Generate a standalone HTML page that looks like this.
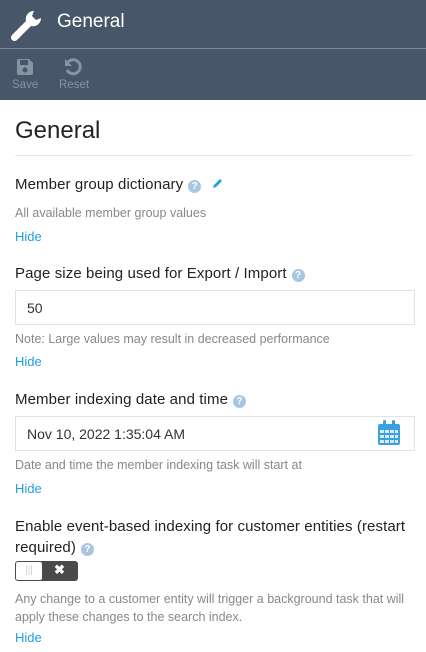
<!DOCTYPE html><html><head><style>
body{margin:0;width:426px;height:652px;overflow:hidden;font-family:"Liberation Sans",sans-serif;background:#fff;position:relative}
.a{position:absolute}
.hd{left:0;top:0;width:426px;height:48px;background:#475669}
.tb{left:0;top:48px;width:426px;height:52px;background:#475669;border-top:1px solid #7a8899;box-sizing:border-box}
.lab{left:15px;font-size:15px;color:#222;letter-spacing:0.1px}
.d{left:15px;font-size:12.5px;color:#888}
.h{left:15px;font-size:13px;color:#1e9ee0}
.in{left:15px;width:400px;height:35px;border:1px solid #e2e2e2;box-sizing:border-box;font-size:14px;color:#333;padding:9px 0 0 11px}
.q{display:inline-block;width:13px;height:13px;border-radius:50%;background:#a9c6e0;color:#fff;font-size:10px;font-weight:bold;text-align:center;line-height:13px;vertical-align:0px;margin-left:5px}
</style></head><body>
<div class="a hd"></div>
<svg class="a" style="left:8px;top:8px" width="36" height="36" viewBox="0 0 36 36"><path d="M26 3a8 8 0 0 0-8 10L4 27a3 3 0 0 0 5 5L23 18a8 8 0 0 0 10-8l-5 2-4-4 2-5z" fill="#fff"/></svg>
<div class="a" style="left:57px;top:11px;font-size:19px;color:#fff">General</div>
<div class="a tb"></div>
<svg class="a" style="left:16px;top:58px" width="18" height="18" viewBox="0 0 18 18"><path d="M1 3a2 2 0 0 1 2-2h10l4 4v10a2 2 0 0 1-2 2H3a2 2 0 0 1-2-2z" fill="#8693a3"/><rect x="4" y="2" width="8" height="5" fill="#475669"/><circle cx="9" cy="12" r="2.5" fill="#475669"/></svg>
<div class="a" style="left:12px;top:79px;font-size:11.5px;color:#8693a3">Save</div>
<svg class="a" style="left:64px;top:58px" width="18" height="18" viewBox="0 0 18 18"><path d="M4 4a7 7 0 1 1-1 8" fill="none" stroke="#8693a3" stroke-width="3"/><path d="M1 1v7h7z" fill="#8693a3"/></svg>
<div class="a" style="left:59px;top:79px;font-size:11.5px;color:#8693a3">Reset</div>
<div class="a" style="left:15px;top:117px;font-size:24px;color:#222">General</div>
<div class="a" style="left:15px;top:155px;width:398px;height:1px;background:#e8e8e8"></div>
<div class="a lab" style="top:176px">Member group dictionary<span class="q">?</span>
<svg width="12" height="12" viewBox="0 0 12 12" style="margin-left:6px"><path d="M1 11l1-3 6-6 2 2-6 6z" fill="#1e9ee0"/></svg></div>
<div class="a d" style="top:206px">All available member group values</div>
<div class="a h" style="top:229px">Hide</div>
<div class="a lab" style="top:265px">Page size being used for Export / Import<span class="q">?</span></div>
<div class="a in" style="top:290px">50</div>
<div class="a d" style="top:332px">Note: Large values may result in decreased performance</div>
<div class="a h" style="top:354px">Hide</div>
<div class="a lab" style="top:391px">Member indexing date and time<span class="q">?</span></div>
<div class="a in" style="top:416px">Nov 10, 2022 1:35:04 AM</div>
<svg class="a" style="left:377px;top:420px" width="24" height="26" viewBox="0 0 24 26"><rect x="1" y="4" width="22" height="21" rx="2" fill="#3aa0e0"/><rect x="6" y="0" width="3" height="7" rx="1.5" fill="#3aa0e0"/><rect x="15" y="0" width="3" height="7" rx="1.5" fill="#3aa0e0"/><g fill="#d6ecfa"><rect x="3" y="10" width="4" height="3"/><rect x="8" y="10" width="4" height="3"/><rect x="13" y="10" width="4" height="3"/><rect x="18" y="10" width="3" height="3"/><rect x="3" y="15" width="4" height="3"/><rect x="8" y="15" width="4" height="3"/><rect x="13" y="15" width="4" height="3"/><rect x="18" y="15" width="3" height="3"/><rect x="3" y="20" width="4" height="3"/><rect x="8" y="20" width="4" height="3"/><rect x="13" y="20" width="4" height="3"/><rect x="18" y="20" width="3" height="3"/></g></svg>
<div class="a d" style="top:458px">Date and time the member indexing task will start at</div>
<div class="a h" style="top:481px">Hide</div>
<div class="a lab" style="top:516px;line-height:21px;width:400px">Enable event-based indexing for customer entities (restart required)<span class="q">?</span></div>
<div class="a" style="left:15px;top:561px;width:63px;height:20px;border-radius:3px;background:#4a4a4a"></div>
<div class="a" style="left:16px;top:562px;width:26px;height:18px;border-radius:2px;background:#fff;color:#ccc;font-size:10px;text-align:center;line-height:18px">|||</div>
<div class="a" style="left:54px;top:562px;color:#fff;font-size:13px;font-weight:bold">✖</div>
<div class="a d" style="top:590px;line-height:18px;width:400px">Any change to a customer entity will trigger a background task that will apply these changes to the search index.</div>
<div class="a h" style="top:630px">Hide</div>
</body></html>
